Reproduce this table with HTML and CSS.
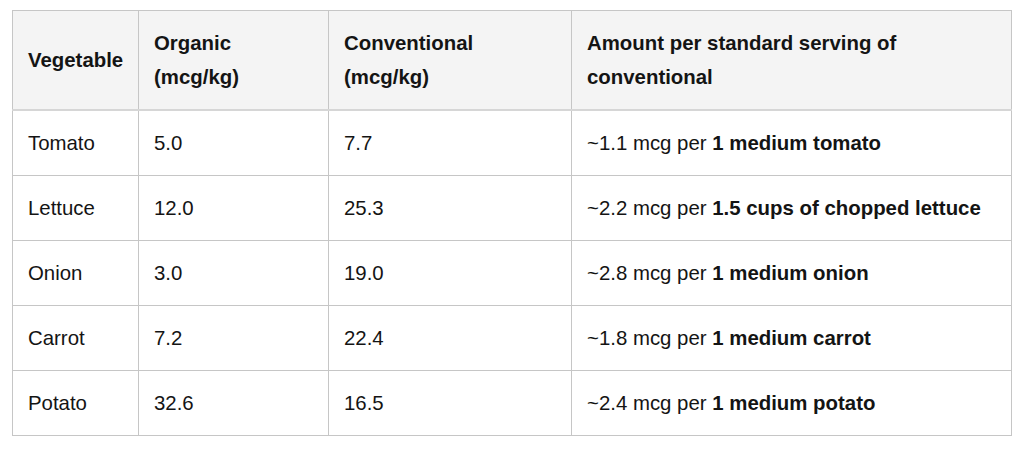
FILE: index.html
```html
<!DOCTYPE html>
<html>
<head>
<meta charset="utf-8">
<link rel="stylesheet" href="styles.css">
</head>
<body>
<table class="data">
  <colgroup>
    <col class="c1"><col class="c2"><col class="c3"><col class="c4">
  </colgroup>
  <thead>
    <tr>
      <th>Vegetable</th>
      <th>Organic<br>(mcg/kg)</th>
      <th>Conventional<br>(mcg/kg)</th>
      <th>Amount per standard serving of<br>conventional</th>
    </tr>
  </thead>
  <tbody>
    <tr><td>Tomato</td><td>5.0</td><td>7.7</td><td>~1.1 mcg per <strong>1 medium tomato</strong></td></tr>
    <tr><td>Lettuce</td><td>12.0</td><td>25.3</td><td>~2.2 mcg per <strong>1.5 cups of chopped lettuce</strong></td></tr>
    <tr><td>Onion</td><td>3.0</td><td>19.0</td><td>~2.8 mcg per <strong>1 medium onion</strong></td></tr>
    <tr><td>Carrot</td><td>7.2</td><td>22.4</td><td>~1.8 mcg per <strong>1 medium carrot</strong></td></tr>
    <tr><td>Potato</td><td>32.6</td><td>16.5</td><td>~2.4 mcg per <strong>1 medium potato</strong></td></tr>
  </tbody>
</table>
</body>
</html>
```
FILE: styles.css
```css
html, body {
  margin: 0;
  padding: 0;
  background: #ffffff;
}
body {
  padding: 10px 12px;
  font-family: "Liberation Sans", Arial, sans-serif;
  color: #141414;
}
.data {
  border-collapse: collapse;
  width: 999px;
  table-layout: fixed;
  font-size: 20.4px;
  line-height: 34px;
}
.c1 { width: 126px; }
.c2 { width: 190px; }
.c3 { width: 243px; }
.c4 { width: 440px; }
.data th, .data td {
  border: 1px solid #c6c6c6;
  padding: 15px 15px;
  text-align: left;
  vertical-align: middle;
}
.data th {
  background: #f4f4f4;
  font-weight: bold;
}
.data thead th {
  border-bottom: 2px solid #d6d6d6;
}
.data strong {
  font-weight: bold;
}
```
